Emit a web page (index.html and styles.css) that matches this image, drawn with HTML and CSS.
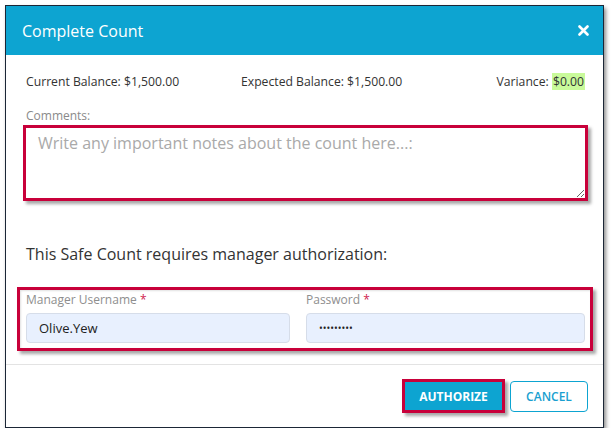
FILE: index.html
```html
<!DOCTYPE html>
<html lang="en">
<head>
<meta charset="utf-8">
<title>Complete Count</title>
<link rel="stylesheet" href="styles.css">
</head>
<body>
<div class="dialog">
  <div class="header">
    <h1 class="title">Complete Count</h1>
    <button class="close" aria-label="Close">
      <svg width="11" height="11" viewBox="0 0 11 11"><path d="M1.5 1.5 L9.5 9.5 M9.5 1.5 L1.5 9.5" stroke="#fff" stroke-width="2.6" stroke-linecap="round"/></svg>
    </button>
  </div>
  <div class="body">
    <div class="balances">
      <div>Current Balance: $1,500.00</div>
      <div>Expected Balance: $1,500.00</div>
      <div>Variance: <span class="ok">$0.00</span></div>
    </div>
    <label class="comments-label" for="comments">Comments:</label>
    <div class="mark mark-notes">
      <textarea id="comments" class="notes" placeholder="Write any important notes about the count here...:"></textarea>
    </div>
    <p class="auth-msg">This Safe Count requires manager authorization:</p>
    <div class="mark mark-creds">
      <div class="creds">
        <div class="field">
          <label class="field-label" for="user">Manager Username <span class="req">*</span></label>
          <input id="user" class="input" type="text" value="Olive.Yew">
        </div>
        <div class="field">
          <label class="field-label" for="pass">Password <span class="req">*</span></label>
          <input id="pass" class="input pass" type="password" value="123456789">
        </div>
      </div>
    </div>
  </div>
  <div class="footer">
    <button class="btn btn-primary">AUTHORIZE</button>
    <button class="btn btn-outline">CANCEL</button>
  </div>
</div>
</body>
</html>
```
FILE: styles.css
```css
* { box-sizing: border-box; }
html, body { margin: 0; padding: 0; background: #fff; }
body { font-family: "Open Sans", "Liberation Sans", sans-serif; color: #333; }

.dialog {
  margin: 5px 0 0 5px;
  width: 599px;
  border: 1px solid #1b2636;
  background: #fff;
  box-shadow: 2px 3px 4px rgba(0,0,0,0.45);
}

.header {
  height: 49px;
  background: #0da4d1;
  display: flex;
  align-items: center;
  justify-content: space-between;
  padding: 0 14px 0 16px;
}
.title {
  margin: 0;
  font-size: 16px;
  font-weight: 400;
  color: #fff;
  line-height: 22px;
}
.close {
  border: 0;
  background: none;
  padding: 0;
  width: 11px;
  height: 11px;
  display: flex;
}

.body { padding: 18px 18px 13px 20px; }

.balances {
  display: grid;
  grid-template-columns: 215px 1fr auto;
  font-size: 12.2px;
  line-height: 17px;
  color: #333;
}
.ok { background: #c9fa9a; padding: 0 1px; }

.comments-label {
  display: block;
  margin-top: 18px;
  font-size: 12px;
  line-height: 15px;
  color: #8a8a8a;
}

.mark {
  border: 3px solid #c8003a;
  box-shadow: 3px 3px 3px rgba(0,0,0,0.35), inset 1px 1px 2px rgba(0,0,0,0.12);
}
.mark-notes { margin: 2px -3px 0 -3px; }
.notes {
  display: block;
  width: 100%;
  height: 70px;
  border: 0;
  padding: 4px 12px;
  font-family: "Open Sans", "Liberation Sans", sans-serif;
  font-size: 16px;
  line-height: 22px;
  color: #333;
  resize: vertical;
  outline: none;
  background: #fff;
}
.notes::placeholder { color: #a9a9a9; }

.auth-msg {
  margin: 42px 0 0;
  font-size: 16px;
  line-height: 22px;
  color: #333;
}

.mark-creds {
  margin: 22px -8px 0 -9px;
  padding: 3px 5px 5px 6px;
}
.creds {
  display: grid;
  grid-template-columns: 264px 1fr;
  column-gap: 16px;
}
.field-label {
  display: block;
  font-size: 12px;
  line-height: 14px;
  color: #8e8e8e;
  margin-bottom: 6px;
}
.req { color: #d0224f; }
.input {
  display: block;
  width: 100%;
  height: 30px;
  border: 1px solid #d6dde9;
  border-radius: 4px;
  background: #e8f0fe;
  padding: 0 12px;
  font-family: "Open Sans", "Liberation Sans", sans-serif;
  font-size: 13px;
  color: #222;
  outline: none;
}
.pass { font-size: 10px; letter-spacing: 0px; }

.footer {
  border-top: 1px solid #e3e3e3;
  padding: 14px 15px 14px;
  display: flex;
  justify-content: flex-end;
  align-items: center;
  gap: 5px;
}
.btn {
  font-family: "Open Sans", "Liberation Sans", sans-serif;
  font-size: 12px;
  cursor: pointer;
}
.btn-primary {
  width: 103px;
  height: 34px;
  border: 3px solid #c8003a;
  background: #0da4d1;
  color: #fff;
  font-weight: 700;
  box-shadow: 3px 3px 3px rgba(0,0,0,0.35);
}
.btn-outline {
  width: 78px;
  height: 31px;
  border: 1px solid #0da4d1;
  border-radius: 4px;
  background: #fff;
  color: #1a9fd0;
  font-weight: 600;
}
```
